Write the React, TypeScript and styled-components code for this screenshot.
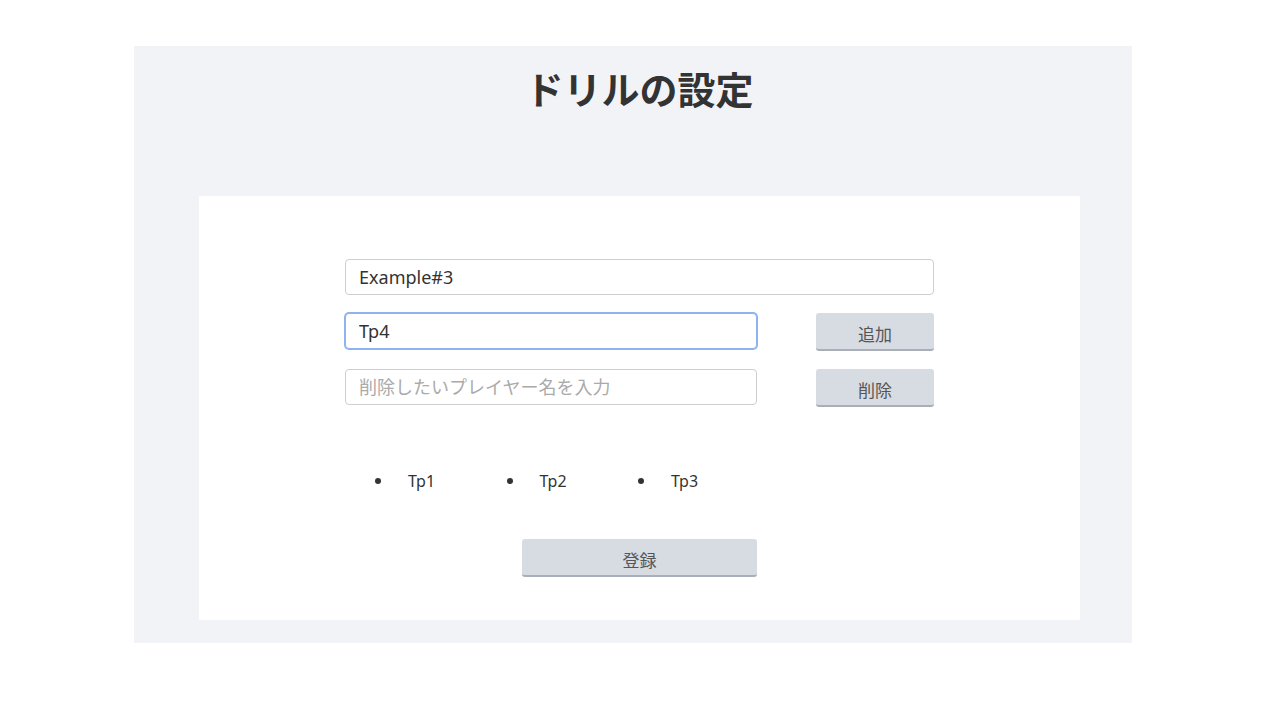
import React from "react";
import styled, { createGlobalStyle } from "styled-components";

const Global = createGlobalStyle`
  html, body { margin: 0; padding: 0; background: #ffffff; }
  body { font-family: "Noto Sans", "Noto Sans CJK JP", sans-serif; color: #333; }
  * { box-sizing: border-box; }
`;

const Outer = styled.div`
  margin: 46px 0 0 134px;
  width: 998px;
  height: 597px;
  background: #f2f3f7;
  padding: 0 52px 23px 65px;
  display: flex;
  flex-direction: column;
`;

const Title = styled.h1`
  margin: 0;
  height: 150px;
  padding-top: 15px;
  text-align: center;
  font-family: "Noto Sans CJK JP", sans-serif;
  font-size: 38px;
  font-weight: 700;
  line-height: 54px;
  color: #333;
`;

const Card = styled.div`
  flex: 1;
  background: #fff;
  display: flex;
  flex-direction: column;
  align-items: center;
  padding-top: 63px;
`;

const Form = styled.div`
  width: 589px;
  display: flex;
  flex-direction: column;
  gap: 18px;
`;

const Row = styled.div`
  display: flex;
  justify-content: space-between;
  align-items: flex-start;
`;

const Input = styled.input<{ $w?: number; $focus?: boolean }>`
  width: ${(p) => (p.$w ? `${p.$w}px` : "100%")};
  height: 36px;
  border: 1px solid ${(p) => (p.$focus ? "#8fb2f0" : "#cfcfcf")};
  box-shadow: ${(p) => (p.$focus ? "0 0 0 1px #8fb2f0" : "none")};
  border-radius: 4px;
  padding: 0 13px;
  font-family: "Noto Sans", "Noto Sans CJK JP", sans-serif;
  font-size: 18px;
  color: #333;
  background: #fff;
  outline: none;
  &::placeholder { color: #aaa; }
`;

const Button = styled.button<{ $w: number }>`
  width: ${(p) => p.$w}px;
  height: 38px;
  border: none;
  border-bottom: 2px solid #a9aeb9;
  border-radius: 3px;
  background: #d7dbe2;
  color: #555;
  font-family: "Noto Sans CJK JP", sans-serif;
  font-size: 17px;
  padding: 4px 0 0;
  cursor: pointer;
`;

const List = styled.ul`
  list-style: none;
  margin: 62px 0 0;
  padding: 0;
  width: 589px;
  display: flex;
  padding-left: 30px;
`;

const Item = styled.li`
  width: 131.5px;
  display: flex;
  align-items: center;
  font-size: 16px;
  color: #333;
  line-height: 24px;
  &::before {
    content: "";
    width: 6px;
    height: 6px;
    border-radius: 50%;
    background: #333;
    margin-right: 27px;
  }
`;

const Submit = styled.div`
  margin-top: 46px;
`;

export default function App() {
  return (
    <>
      <Global />
      <Outer>
        <Title>ドリルの設定</Title>
        <Card>
          <Form>
            <Input defaultValue="Example#3" />
            <Row>
              <Input $w={412} $focus defaultValue="Tp4" />
              <Button $w={118}>追加</Button>
            </Row>
            <Row>
              <Input $w={412} placeholder="削除したいプレイヤー名を入力" />
              <Button $w={118}>削除</Button>
            </Row>
          </Form>
          <List>
            <Item>Tp1</Item>
            <Item>Tp2</Item>
            <Item>Tp3</Item>
          </List>
          <Submit>
            <Button $w={235}>登録</Button>
          </Submit>
        </Card>
      </Outer>
    </>
  );
}
